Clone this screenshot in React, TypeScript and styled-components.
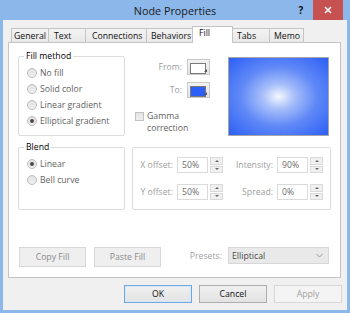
import React from "react";
import styled, { createGlobalStyle, css } from "styled-components";

const GlobalStyle = createGlobalStyle`
  html, body { margin: 0; padding: 0; width: 350px; height: 313px; overflow: hidden; background: #8cb7ea; }
  body { font-family: "Open Sans", "Noto Sans", sans-serif; font-size: 8.7px; color: #000; }
  * { box-sizing: border-box; }
`;

const Window = styled.div`
  width: 350px;
  height: 313px;
  background: #8cb7ea;
  display: flex;
  flex-direction: column;
  padding: 0 3px 3px 3px;
`;

const TitleBar = styled.div`
  height: 20px;
  display: grid;
  grid-template-columns: 1fr auto 1fr;
  align-items: center;
`;

const Title = styled.div`
  grid-column: 2;
  font-size: 10.8px;
  color: #1a1a1a;
  line-height: 20px;
  padding-top: 1px;
`;

const Controls = styled.div`
  grid-column: 3;
  justify-self: end;
  display: flex;
  align-self: start;
  height: 20px;
  margin-right: 4px;
`;

const HelpButton = styled.div`
  width: 24px;
  height: 20px;
  display: flex;
  align-items: center;
  justify-content: center;
  font-weight: 700;
  font-size: 10px;
  color: #111;
`;

const CloseButton = styled.div`
  width: 30px;
  height: 20px;
  background: #c75050;
  display: flex;
  align-items: center;
  justify-content: center;
`;

const Client = styled.div`
  flex: 1;
  background: #f0f0f0;
  display: flex;
  flex-direction: column;
  padding: 6px 5px 7px 5px;
`;

const TabStrip = styled.div`
  height: 16px;
  display: flex;
  align-items: flex-end;
  padding-left: 3px;
  position: relative;
  z-index: 1;
`;

const Tab = styled.div<{ $w: number; $pad: number; $active?: boolean }>`
  width: ${(p) => p.$w}px;
  padding-left: ${(p) => p.$pad}px;
  height: 14px;
  line-height: 14px;
  border: 1px solid #c4c4c4;
  border-bottom: none;
  background: linear-gradient(#f3f3f3, #e8e8e8);
  white-space: nowrap;
  color: #111;
  & + & { margin-left: -1px; }
  ${(p) =>
    p.$active &&
    css`
      height: 17px;
      margin-bottom: -1px;
      line-height: 12px;
      background: #fff;
      position: relative;
      z-index: 2;
    `}
`;

const Panel = styled.div`
  width: 333px;
  height: 236px;
  background: #fff;
  border: 1px solid #c4c4c4;
  padding: 13px 0 0 9px;
  display: flex;
  flex-direction: column;
`;

const Row = styled.div<{ $h: number; $mt?: number }>`
  display: flex;
  align-items: flex-start;
  height: ${(p) => p.$h}px;
  margin-top: ${(p) => p.$mt ?? 0}px;
`;

const GroupBox = styled.div<{ $w: number; $h: number; $ml?: number }>`
  position: relative;
  width: ${(p) => p.$w}px;
  height: ${(p) => p.$h}px;
  margin-left: ${(p) => p.$ml ?? 0}px;
  border: 1px solid #dcdcdc;
  border-radius: 2px;
`;

const Legend = styled.span`
  position: absolute;
  top: -7px;
  left: 5px;
  padding: 0 2px;
  background: #fff;
  line-height: 12px;
  color: #000;
`;

const RadioList = styled.div`
  display: flex;
  flex-direction: column;
  padding: 8px 0 0 8px;
`;

const RadioItem = styled.div`
  height: 16px;
  display: flex;
  align-items: center;
  gap: 3px;
  color: #5f5f5f;
  white-space: nowrap;
`;

const RadioCircle = styled.span<{ $checked?: boolean }>`
  width: 10px;
  height: 10px;
  border-radius: 50%;
  border: 1px solid #bdbdbd;
  background: linear-gradient(#e2e2e2, #f0f0f0);
  display: flex;
  align-items: center;
  justify-content: center;
  &::after {
    content: "";
    width: 4px;
    height: 4px;
    border-radius: 50%;
    background: ${(p) => (p.$checked ? "#4a4a4a" : "transparent")};
  }
`;

const MidColumn = styled.div`
  width: 85px;
  margin-top: 3px;
  display: flex;
  flex-direction: column;
`;

const SwatchGrid = styled.div`
  display: grid;
  grid-template-columns: 1fr 23px;
  column-gap: 5px;
  row-gap: 7px;
  align-items: center;
`;

const DimLabel = styled.span`
  color: #a0a0a0;
  text-align: right;
  white-space: nowrap;
  line-height: 16px;
`;

const Swatch = styled.div<{ $color: string }>`
  position: relative;
  width: 23px;
  height: 16px;
  border: 1px solid #c9c9c9;
  background: linear-gradient(#f2f2f2, #e4e4e4);
  padding: 3px 0 0 2px;
  &::before {
    content: "";
    display: block;
    width: 14px;
    height: 9px;
    background: ${(p) => p.$color};
    border: 1px solid #7a7a7a;
  }
  &::after {
    content: "";
    position: absolute;
    right: 2px;
    bottom: 2px;
    border-left: 3px solid transparent;
    border-bottom: 3px solid #555;
  }
`;

const Gamma = styled.div`
  margin-top: 12px;
  padding-left: 10px;
  display: flex;
  align-items: flex-start;
  gap: 3px;
`;

const CheckBox = styled.span`
  width: 9px;
  height: 9px;
  margin-top: 2px;
  border: 1px solid #c2c2c2;
  background: linear-gradient(#e4e4e4, #efefef);
  flex: none;
`;

const GammaText = styled.span`
  color: #5f5f5f;
  line-height: 12px;
`;

const Preview = styled.div`
  width: 101px;
  height: 79px;
  margin: 1px 0 0 18px;
  border: 1px solid #a6a6a6;
  background: radial-gradient(ellipse farthest-corner at 50% 50%, #f6f8ff 0%, #a9c0fa 22%, #5f88f7 55%, #2c5ff5 100%);
`;

const OffsetGrid = styled.div`
  display: grid;
  grid-template-columns: 40px 46px 46px 46px;
  grid-auto-rows: 16px;
  column-gap: 4px;
  row-gap: 11px;
  padding-top: 9px;
`;

const SpinBox = styled.div`
  display: flex;
  height: 16px;
`;

const SpinInput = styled.div`
  width: 31px;
  height: 16px;
  border: 1px solid #dadada;
  background: #fff;
  color: #6d6d6d;
  padding-left: 4px;
  line-height: 14px;
`;

const SpinButtons = styled.div`
  width: 13px;
  margin-left: 2px;
  display: flex;
  flex-direction: column;
  gap: 1px;
`;

const SpinHalf = styled.div<{ $up?: boolean }>`
  flex: 1;
  border: 1px solid #dadada;
  background: #f0f0f0;
  display: flex;
  align-items: center;
  justify-content: center;
  &::after {
    content: "";
    border-left: 2px solid transparent;
    border-right: 2px solid transparent;
    ${(p) => (p.$up ? "border-bottom: 2px solid #666;" : "border-top: 2px solid #666;")}
  }
`;

const PanelButton = styled.div<{ $ml: number }>`
  width: 67px;
  height: 20px;
  margin-left: ${(p) => p.$ml}px;
  border: 1px solid #d7d7d7;
  background: #efefef;
  color: #8a8a8a;
  display: flex;
  align-items: center;
  justify-content: center;
`;

const Presets = styled.div`
  margin-left: auto;
  margin-right: 11px;
  display: flex;
  align-items: center;
  gap: 6px;
  height: 17px;
`;

const Select = styled.div`
  width: 101px;
  height: 17px;
  border: 1px solid #d7d7d7;
  background: #e9e9e9;
  color: #4a4a4a;
  display: flex;
  align-items: center;
  justify-content: space-between;
  padding: 0 5px 0 3px;
`;

const DialogButtons = styled.div`
  display: flex;
  justify-content: flex-end;
  gap: 7px;
  margin-top: 7px;
  height: 18px;
`;

const DialogButton = styled.div<{ $kind?: "default" | "disabled" }>`
  width: 68px;
  height: 18px;
  border: 1px solid #adadad;
  background: linear-gradient(#f0f0f0, #e3e3e3);
  color: #111;
  display: flex;
  align-items: center;
  justify-content: center;
  ${(p) =>
    p.$kind === "default" &&
    css`
      border-color: #6fa8e0;
      box-shadow: inset 0 0 0 1px #d6e8f8;
    `}
  ${(p) =>
    p.$kind === "disabled" &&
    css`
      border-color: #d8d8d8;
      background: #f4f4f4;
      color: #a0a0a0;
    `}
`;

const tabs = [
  { label: "General", w: 38, pad: 2 },
  { label: "Text", w: 38, pad: 5 },
  { label: "Connections", w: 62, pad: 6 },
  { label: "Behaviors", w: 47, pad: 4 },
  { label: "Fill", w: 41, pad: 6, active: true },
  { label: "Tabs", w: 38, pad: 4 },
  { label: "Memo", w: 35, pad: 4 },
];

const Spin = ({ value }: { value: string }) => (
  <SpinBox>
    <SpinInput>{value}</SpinInput>
    <SpinButtons>
      <SpinHalf $up />
      <SpinHalf />
    </SpinButtons>
  </SpinBox>
);

export default function App() {
  return (
    <>
      <GlobalStyle />
      <Window>
        <TitleBar>
          <Title>Node Properties</Title>
          <Controls>
            <HelpButton>?</HelpButton>
            <CloseButton>
              <svg width="8" height="8" viewBox="0 0 8 8">
                <path d="M1 1 L7 7 M7 1 L1 7" stroke="#fff" strokeWidth="1.6" />
              </svg>
            </CloseButton>
          </Controls>
        </TitleBar>
        <Client>
          <TabStrip>
            {tabs.map((t) => (
              <Tab key={t.label} $w={t.w} $pad={t.pad} $active={t.active}>
                {t.label}
              </Tab>
            ))}
          </TabStrip>
          <Panel>
            <Row $h={80}>
              <GroupBox $w={107} $h={80}>
                <Legend>Fill method</Legend>
                <RadioList>
                  <RadioItem><RadioCircle />No fill</RadioItem>
                  <RadioItem><RadioCircle />Solid color</RadioItem>
                  <RadioItem><RadioCircle />Linear gradient</RadioItem>
                  <RadioItem><RadioCircle $checked />Elliptical gradient</RadioItem>
                </RadioList>
              </GroupBox>
              <MidColumn>
                <SwatchGrid>
                  <DimLabel>From:</DimLabel>
                  <Swatch $color="#ffffff" />
                  <DimLabel>To:</DimLabel>
                  <Swatch $color="#2b5ff6" />
                </SwatchGrid>
                <Gamma>
                  <CheckBox />
                  <GammaText>
                    Gamma
                    <br />
                    correction
                  </GammaText>
                </Gamma>
              </MidColumn>
              <Preview />
            </Row>
            <Row $h={63} $mt={11}>
              <GroupBox $w={107} $h={63}>
                <Legend>Blend</Legend>
                <RadioList>
                  <RadioItem><RadioCircle $checked />Linear</RadioItem>
                  <RadioItem><RadioCircle />Bell curve</RadioItem>
                </RadioList>
              </GroupBox>
              <GroupBox $w={199} $h={63} $ml={7}>
                <OffsetGrid>
                  <DimLabel>X offset:</DimLabel>
                  <Spin value="50%" />
                  <DimLabel>Intensity:</DimLabel>
                  <Spin value="90%" />
                  <DimLabel>Y offset:</DimLabel>
                  <Spin value="50%" />
                  <DimLabel>Spread:</DimLabel>
                  <Spin value="0%" />
                </OffsetGrid>
              </GroupBox>
            </Row>
            <Row $h={20} $mt={37}>
              <PanelButton $ml={1}>Copy Fill</PanelButton>
              <PanelButton $ml={8}>Paste Fill</PanelButton>
              <Presets>
                <DimLabel>Presets:</DimLabel>
                <Select>
                  <span>Elliptical</span>
                  <svg width="7" height="5" viewBox="0 0 7 5">
                    <path d="M0.5 1 L3.5 4 L6.5 1" fill="none" stroke="#9a9a9a" strokeWidth="1" />
                  </svg>
                </Select>
              </Presets>
            </Row>
          </Panel>
          <DialogButtons>
            <DialogButton $kind="default">OK</DialogButton>
            <DialogButton>Cancel</DialogButton>
            <DialogButton $kind="disabled">Apply</DialogButton>
          </DialogButtons>
        </Client>
      </Window>
    </>
  );
}
